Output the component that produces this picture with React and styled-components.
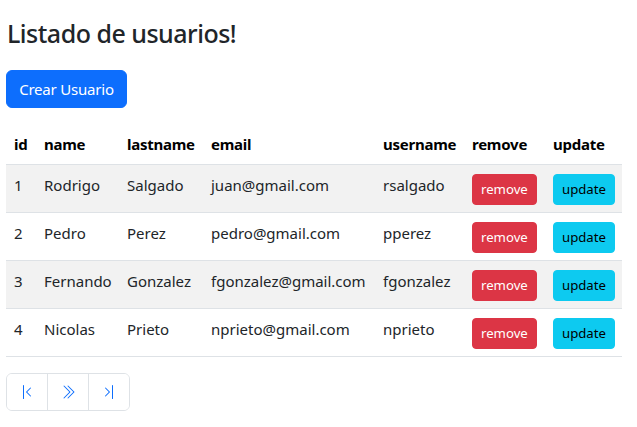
import React from "react";
import styled, { createGlobalStyle } from "styled-components";
import { BsChevronBarLeft, BsChevronDoubleRight, BsChevronBarRight } from "react-icons/bs";

const Global = createGlobalStyle`
  html, body { margin: 0; padding: 0; background: #fff; }
  body {
    font-family: "Noto Sans", "Open Sans", sans-serif;
    font-size: 16px;
    line-height: 1.5;
    color: #212529;
  }
  * { box-sizing: border-box; }
`;

const Page = styled.div`
  padding: 17px 15px 0 6px;
  display: flex;
  flex-direction: column;
  align-items: flex-start;
`;

const Title = styled.h2`
  margin: 0 0 21px 1px;
  font-size: 25px;
  letter-spacing: -0.5px;
  font-weight: 500;
  line-height: 32px;
  color: #212529;
`;

const Button = styled.button`
  font-family: inherit;
  border: 1px solid ${(p) => p.$bg};
  background: ${(p) => p.$bg};
  color: ${(p) => p.$fg};
  font-size: ${(p) => (p.$small ? "13.2px" : "15px")};
  line-height: ${(p) => (p.$small ? "21px" : "24px")};
  padding: ${(p) => (p.$small ? "4px 8px" : "6px 12px")};
  border-radius: ${(p) => (p.$small ? "4px" : "6px")};
  cursor: pointer;
  white-space: nowrap;
`;

const CreateButton = styled(Button)`
  margin-bottom: 16px;
  width: 121px;
  height: 38px;
  padding: 6px 0;
  letter-spacing: -0.2px;
`;

const Table = styled.table`
  width: 616px;
  border-collapse: collapse;
  table-layout: fixed;
  margin-bottom: 16px;
`;

const Th = styled.th`
  text-align: left;
  font-weight: 700;
  font-size: 15px;
  letter-spacing: -0.25px;
  color: #000;
  padding: 8px;
  line-height: 24px;
  border-bottom: 1px solid #dee2e6;
  vertical-align: top;
  white-space: nowrap;
`;

const Row = styled.tr`
  background: ${(p) => (p.$striped ? "#f2f2f2" : "transparent")};
`;

const Td = styled.td`
  padding: 8px;
  line-height: 24px;
  border-bottom: 1px solid #dee2e6;
  vertical-align: top;
  white-space: nowrap;
  overflow: visible;
  color: #212529;
  font-size: 15px;
`;

const ActionTd = styled(Td)`
  padding: 9px 8px 7px;
`;

const Pagination = styled.nav`
  display: flex;
  border: 1px solid #dee2e6;
  border-radius: 6px;
  overflow: hidden;
`;

const PageLink = styled.a`
  display: flex;
  align-items: center;
  justify-content: center;
  width: ${(p) => (p.$first ? "40px" : "41px")};
  height: 36px;
  color: #0d6efd;
  background: #fff;
  border-left: ${(p) => (p.$first ? "none" : "1px solid #dee2e6")};
  font-size: 16px;
  cursor: pointer;
`;

const users = [
  { id: 1, name: "Rodrigo", lastname: "Salgado", email: "juan@gmail.com", username: "rsalgado" },
  { id: 2, name: "Pedro", lastname: "Perez", email: "pedro@gmail.com", username: "pperez" },
  { id: 3, name: "Fernando", lastname: "Gonzalez", email: "fgonzalez@gmail.com", username: "fgonzalez" },
  { id: 4, name: "Nicolas", lastname: "Prieto", email: "nprieto@gmail.com", username: "nprieto" },
];

const widths = [30, 83, 84, 172, 89, 81, 77];
const heads = ["id", "name", "lastname", "email", "username", "remove", "update"];

export default function App() {
  return (
    <>
      <Global />
      <Page>
        <Title>Listado de usuarios!</Title>
        <CreateButton $bg="#0d6efd" $fg="#fff">Crear Usuario</CreateButton>
        <Table>
          <colgroup>
            {widths.map((w, i) => (
              <col key={i} style={{ width: w }} />
            ))}
          </colgroup>
          <thead>
            <tr>
              {heads.map((h) => (
                <Th key={h}>{h}</Th>
              ))}
            </tr>
          </thead>
          <tbody>
            {users.map((u, i) => (
              <Row key={u.id} $striped={i % 2 === 0}>
                <Td>{u.id}</Td>
                <Td>{u.name}</Td>
                <Td>{u.lastname}</Td>
                <Td>{u.email}</Td>
                <Td>{u.username}</Td>
                <ActionTd>
                  <Button $small $bg="#dc3545" $fg="#fff">remove</Button>
                </ActionTd>
                <ActionTd>
                  <Button $small $bg="#0dcaf0" $fg="#000">update</Button>
                </ActionTd>
              </Row>
            ))}
          </tbody>
        </Table>
        <Pagination>
          <PageLink $first><BsChevronBarLeft size={16} /></PageLink>
          <PageLink><BsChevronDoubleRight size={16} /></PageLink>
          <PageLink><BsChevronBarRight size={16} /></PageLink>
        </Pagination>
      </Page>
    </>
  );
}
